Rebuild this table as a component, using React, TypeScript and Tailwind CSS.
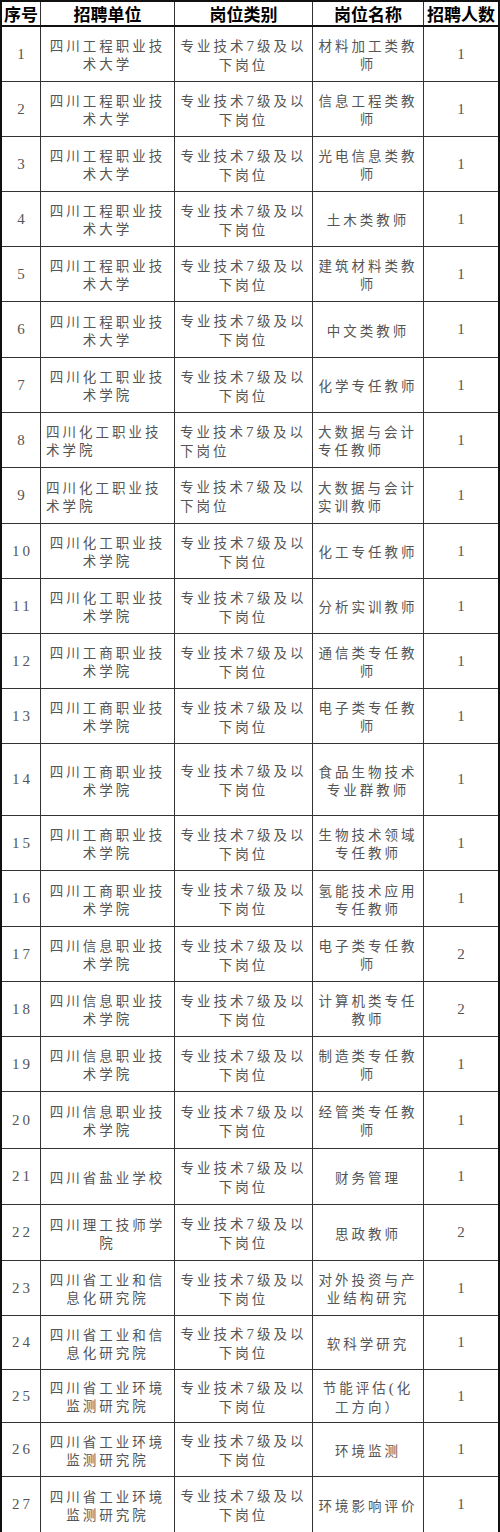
import React from "react";

type Row = {
  n: string;
  unit: string[];
  cat?: string[];
  name: string[];
  count: string;
  h: string;
  left?: boolean;
};

const CAT = ["专业技术7级及以", "下岗位"];

const rows: Row[] = [
  { n: "1", unit: ["四川工程职业技", "术大学"], name: ["材料加工类教", "师"], count: "1", h: "h-[55px]" },
  { n: "2", unit: ["四川工程职业技", "术大学"], name: ["信息工程类教", "师"], count: "1", h: "h-[55px]" },
  { n: "3", unit: ["四川工程职业技", "术大学"], name: ["光电信息类教", "师"], count: "1", h: "h-[55px]" },
  { n: "4", unit: ["四川工程职业技", "术大学"], name: ["土木类教师"], count: "1", h: "h-[55px]" },
  { n: "5", unit: ["四川工程职业技", "术大学"], name: ["建筑材料类教", "师"], count: "1", h: "h-[55px]" },
  { n: "6", unit: ["四川工程职业技", "术大学"], name: ["中文类教师"], count: "1", h: "h-[56px]" },
  { n: "7", unit: ["四川化工职业技", "术学院"], name: ["化学专任教师"], count: "1", h: "h-[55px]" },
  { n: "8", unit: ["四川化工职业技", "术学院"], name: ["大数据与会计", "专任教师"], count: "1", h: "h-[55px]", left: true },
  { n: "9", unit: ["四川化工职业技", "术学院"], name: ["大数据与会计", "实训教师"], count: "1", h: "h-[56px]", left: true },
  { n: "10", unit: ["四川化工职业技", "术学院"], name: ["化工专任教师"], count: "1", h: "h-[55px]" },
  { n: "11", unit: ["四川化工职业技", "术学院"], name: ["分析实训教师"], count: "1", h: "h-[55px]" },
  { n: "12", unit: ["四川工商职业技", "术学院"], name: ["通信类专任教", "师"], count: "1", h: "h-[55px]" },
  { n: "13", unit: ["四川工商职业技", "术学院"], name: ["电子类专任教", "师"], count: "1", h: "h-[55px]" },
  { n: "14", unit: ["四川工商职业技", "术学院"], name: ["食品生物技术", "专业群教师"], count: "1", h: "h-[72px]" },
  { n: "15", unit: ["四川工商职业技", "术学院"], name: ["生物技术领域", "专任教师"], count: "1", h: "h-[55px]" },
  { n: "16", unit: ["四川工商职业技", "术学院"], name: ["氢能技术应用", "专任教师"], count: "1", h: "h-[56px]" },
  { n: "17", unit: ["四川信息职业技", "术学院"], name: ["电子类专任教", "师"], count: "2", h: "h-[55px]" },
  { n: "18", unit: ["四川信息职业技", "术学院"], name: ["计算机类专任", "教师"], count: "2", h: "h-[55px]" },
  { n: "19", unit: ["四川信息职业技", "术学院"], name: ["制造类专任教", "师"], count: "1", h: "h-[55px]" },
  { n: "20", unit: ["四川信息职业技", "术学院"], name: ["经管类专任教", "师"], count: "1", h: "h-[57px]" },
  { n: "21", unit: ["四川省盐业学校"], name: ["财务管理"], count: "1", h: "h-[56px]" },
  { n: "22", unit: ["四川理工技师学", "院"], name: ["思政教师"], count: "2", h: "h-[56px]" },
  { n: "23", unit: ["四川省工业和信", "息化研究院"], name: ["对外投资与产", "业结构研究"], count: "1", h: "h-[55px]" },
  { n: "24", unit: ["四川省工业和信", "息化研究院"], name: ["软科学研究"], count: "1", h: "h-[54px]" },
  { n: "25", unit: ["四川省工业环境", "监测研究院"], name: ["节能评估(化", "工方向）"], count: "1", h: "h-[53px]" },
  { n: "26", unit: ["四川省工业环境", "监测研究院"], name: ["环境监测"], count: "1", h: "h-[54px]" },
  { n: "27", unit: ["四川省工业环境", "监测研究院"], name: ["环境影响评价"], count: "1", h: "h-[55px]" },
];

function Mixed({ text }: { text: string }) {
  const parts = text.split(/(\d+|\(|\))/).filter((p) => p.length > 0);
  return (
    <>
      {parts.map((p, i) =>
        /^[\d()]+$/.test(p) ? (
          <span key={i} className="font-['Liberation_Serif',serif] text-[15px]">
            {p}
          </span>
        ) : (
          <span key={i}>{p}</span>
        )
      )}
    </>
  );
}

function TextCell({ lines, left, w }: { lines: string[]; left?: boolean; w: string }) {
  return (
    <div
      className={`${w} h-full border-r border-[#333] flex flex-col justify-center ${
        left ? "items-start pl-[5px]" : "items-center"
      }`}
    >
      {lines.map((l, i) => (
        <div key={i} className="whitespace-nowrap leading-[18px] tracking-[3px] text-[13.5px]">
          <Mixed text={l} />
        </div>
      ))}
    </div>
  );
}

export default function App() {
  return (
    <div className="w-[500px] bg-white font-['Noto_Sans_CJK_SC',sans-serif] text-[#555]">
      <div className="border-2 border-[#111] w-[500px] box-border">
        <div className="flex h-[25px] border-b-2 border-[#111] text-black font-bold text-[17px] leading-none">
          <div className="w-[39px] h-full border-r border-[#333] flex items-center justify-center whitespace-nowrap">
            序号
          </div>
          <div className="w-[134px] h-full border-r border-[#333] flex items-center justify-center">招聘单位</div>
          <div className="w-[138px] h-full border-r border-[#333] flex items-center justify-center">岗位类别</div>
          <div className="w-[111px] h-full border-r border-[#333] flex items-center justify-center">岗位名称</div>
          <div className="w-[74px] h-full flex items-center justify-center whitespace-nowrap">招聘人数</div>
        </div>
        {rows.map((r, idx) => (
          <div
            key={r.n}
            className={`flex ${r.h} ${idx < rows.length - 1 ? "border-b border-[#333]" : ""}`}
          >
            <div className="w-[39px] h-full border-r border-[#333] flex items-center justify-center font-['Liberation_Serif',serif] text-[15px] tracking-[3px] pl-[3px]">
              {r.n}
            </div>
            <TextCell lines={r.unit} left={r.left} w="w-[134px]" />
            <TextCell lines={r.cat ?? CAT} left={r.left} w="w-[138px]" />
            <TextCell lines={r.name} left={r.left} w="w-[111px]" />
            <div className="w-[74px] h-full flex items-center justify-center font-['Liberation_Serif',serif] text-[15px]">
              {r.count}
            </div>
          </div>
        ))}
      </div>
    </div>
  );
}
